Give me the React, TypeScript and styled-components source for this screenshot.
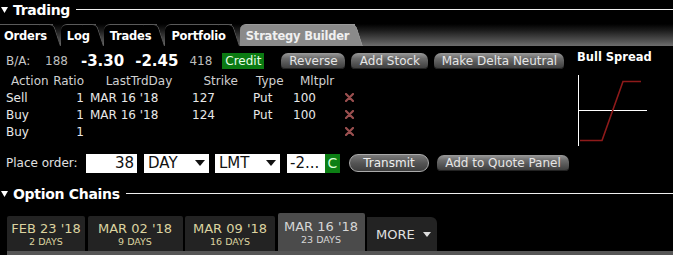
import React from "react";
import styled, { createGlobalStyle } from "styled-components";

const legs = [
  { action: "Sell", ratio: 1, day: "MAR 16 '18", strike: "127", type: "Put", mult: "100" },
  { action: "Buy", ratio: 1, day: "MAR 16 '18", strike: "124", type: "Put", mult: "100" },
  { action: "Buy", ratio: 1, day: "", strike: "", type: "", mult: "" },
];

const tabs = ["Orders", "Log", "Trades", "Portfolio", "Strategy Builder"];

const expiries = [
  { date: "FEB 23 '18", days: "2 DAYS", width: 78 },
  { date: "MAR 02 '18", days: "9 DAYS", width: 95 },
  { date: "MAR 09 '18", days: "16 DAYS", width: 90 },
  { date: "MAR 16 '18", days: "23 DAYS", width: 87, active: true },
];

export default function App() {
  return (
    <>
      <GlobalStyle />
      <Page>
        <SectionHeader>
          <Caret />
          <SectionTitle>Trading</SectionTitle>
          <Rule />
        </SectionHeader>

        <TabStrip>
          {tabs.map((t) => (
            <Tab key={t} $active={t === "Strategy Builder"}>
              {t}
            </Tab>
          ))}
        </TabStrip>

        <Builder>
          <LeftColumn>
            <QuoteRow>
              <Muted>B/A:</Muted>
              <Size $mr={13}>188</Size>
              <Price>-3.30</Price>
              <Price>-2.45</Price>
              <Size $mr={10}>418</Size>
              <Credit>Credit</Credit>
              <Buttons>
                <GrayButton $w={64}>Reverse</GrayButton>
                <GrayButton $w={77}>Add Stock</GrayButton>
                <GrayButton $w={130}>Make Delta Neutral</GrayButton>
              </Buttons>
            </QuoteRow>

            <LegTable>
              <HeadCell $align="left" $pad={5}>Action</HeadCell>
              <HeadCell $align="right">Ratio</HeadCell>
              <HeadCell $align="center" $pad={4}>LastTrdDay</HeadCell>
              <HeadCell $align="right" $pad={12}>Strike</HeadCell>
              <HeadCell $align="left" $pad={6}>Type</HeadCell>
              <HeadCell $align="left" $pad={10}>Mltplr</HeadCell>
              <HeadCell $align="left" />
              {legs.map((l, i) => (
                <React.Fragment key={i}>
                  <Cell $align="left">{l.action}</Cell>
                  <Cell $align="right">{l.ratio}</Cell>
                  <Cell $align="left" $pad={6}>{l.day}</Cell>
                  <Cell $align="left" $pad={2}>{l.strike}</Cell>
                  <Cell $align="left" $pad={3}>{l.type}</Cell>
                  <Cell $align="left" $pad={3}>{l.mult}</Cell>
                  <Cell $align="left" $pad={5}>
                    <RemoveIcon />
                  </Cell>
                </React.Fragment>
              ))}
            </LegTable>

            <OrderRow>
              <Label>Place order:</Label>
              <Field $w={51} $align="right" $mr={7}>38</Field>
              <Select $w={65}>
                DAY <Arrow />
              </Select>
              <Select $w={65}>
                LMT <Arrow />
              </Select>
              <PriceField>
                <Field $w={38} $align="left" $mr={0}>-2...</Field>
                <GreenC>C</GreenC>
              </PriceField>
              <TransmitButton>Transmit</TransmitButton>
              <GrayButton $w={132}>Add to Quote Panel</GrayButton>
            </OrderRow>
          </LeftColumn>

          <RightColumn>
            <StrategyName>Bull Spread</StrategyName>
            <PayoffChart />
          </RightColumn>
        </Builder>

        <SectionHeader>
          <Caret />
          <SectionTitle>Option Chains</SectionTitle>
          <Rule />
        </SectionHeader>

        <ExpiryStrip>
          {expiries.map((e) => (
            <ExpiryTab key={e.date} $active={!!e.active} $w={e.width}>
              <ExpiryDate $active={!!e.active}>{e.date}</ExpiryDate>
              <ExpiryDays $active={!!e.active}>{e.days}</ExpiryDays>
            </ExpiryTab>
          ))}
          <MoreTab>
            MORE <SmallArrow />
          </MoreTab>
        </ExpiryStrip>
        <ExpiryBar />
      </Page>
    </>
  );
}

const Caret = () => (
  <svg width="7" height="6" viewBox="0 0 7 6">
    <polygon points="0,0 7,0 3.5,6" fill="#fff" />
  </svg>
);

const Arrow = () => (
  <svg width="10" height="6" viewBox="0 0 10 6">
    <polygon points="0,0 10,0 5,6" fill="#111" />
  </svg>
);

const SmallArrow = () => (
  <svg width="8" height="5" viewBox="0 0 8 5">
    <polygon points="0,0 8,0 4,5" fill="#ddd" />
  </svg>
);

const RemoveIcon = () => (
  <svg width="9" height="9" viewBox="0 0 9 9">
    <path d="M1 1 L8 8 M8 1 L1 8" stroke="#9a4f4f" strokeWidth="2.2" strokeLinecap="round" />
  </svg>
);

const PayoffChart = () => (
  <svg width="76" height="72" viewBox="0 0 76 72">
    <line x1="1.5" y1="0" x2="1.5" y2="71" stroke="#fff" strokeWidth="1" />
    <line x1="1" y1="35.5" x2="70" y2="35.5" stroke="#fff" strokeWidth="1" />
    <polyline points="3,65.5 25,65.5 46,6.5 64,6.5" fill="none" stroke="#8e1a1a" strokeWidth="1.6" />
  </svg>
);

const GlobalStyle = createGlobalStyle`
  html, body {
    margin: 0;
    padding: 0;
    background: #000;
  }
  body {
    font-family: "DejaVu Sans", Verdana, sans-serif;
    color: #fff;
    overflow: hidden;
  }
`;

const Page = styled.div`
  width: 673px;
  height: 255px;
  background: #000;
  display: flex;
  flex-direction: column;
`;

const SectionHeader = styled.div`
  display: flex;
  align-items: center;
  gap: 5px;
  height: 19px;
  padding-left: 1px;
`;

const SectionTitle = styled.div`
  font-size: 14px;
  font-weight: bold;
  letter-spacing: -0.3px;
  color: #fff;
`;

const Rule = styled.div`
  flex: 1;
  height: 1px;
  background: #eee;
  margin-left: 1px;
  margin-top: -1px;
`;

const TabStrip = styled.div`
  display: flex;
  align-items: flex-end;
  height: 22px;
  margin-top: 5px;
  background: linear-gradient(180deg, #000 0%, #1c1c1c 30%, #555 80%, #6e6e6e 100%);
`;

const Tab = styled.div<{ $active: boolean }>`
  position: relative;
  height: 21px;
  line-height: 22px;
  padding: 0 6px;
  margin-right: 8px;
  font-size: 11.5px;
  font-weight: bold;
  letter-spacing: -0.2px;
  color: ${(p) => (p.$active ? "#f0f0f0" : "#fff")};
  background: ${(p) => (p.$active ? "#8a8a8a" : "#000")};
  border-top: 1px solid ${(p) => (p.$active ? "#9a9a9a" : "#5a5a5a")};
  border-top-left-radius: 6px;
  z-index: ${(p) => (p.$active ? 2 : 1)};
  &:first-child {
    border-top-left-radius: 0;
    padding-left: 4px;
  }
  &::after {
    content: "";
    position: absolute;
    top: -1px;
    bottom: 0;
    right: -8px;
    width: 14px;
    background: ${(p) => (p.$active ? "#8a8a8a" : "#000")};
    border-top: 1px solid ${(p) => (p.$active ? "#9a9a9a" : "#5a5a5a")};
    border-right: 1px solid ${(p) => (p.$active ? "#9a9a9a" : "#5a5a5a")};
    border-top-right-radius: 5px;
    transform: skewX(18deg);
    transform-origin: bottom;
    z-index: -1;
  }
`;

const Builder = styled.div`
  display: flex;
  height: 138px;
`;

const LeftColumn = styled.div`
  width: 577px;
  display: flex;
  flex-direction: column;
`;

const RightColumn = styled.div`
  display: flex;
  flex-direction: column;
  padding-top: 4px;
`;

const QuoteRow = styled.div`
  display: flex;
  align-items: center;
  height: 18px;
  margin-top: 6px;
  padding-left: 6px;
  font-size: 12px;
`;

const Muted = styled.span`
  color: #c8c8c8;
  width: 39px;
`;

const Size = styled.span<{ $mr: number }>`
  color: #bdbdbd;
  margin-right: ${(p) => p.$mr}px;
`;

const Price = styled.span`
  font-size: 15px;
  font-weight: bold;
  color: #fff;
  margin-right: 11px;
`;

const Credit = styled.span`
  background: #0b7a12;
  color: #e8ffe8;
  padding: 0 3px;
  height: 16px;
  line-height: 16px;
  font-size: 12px;
`;

const Buttons = styled.div`
  display: flex;
  gap: 6px;
  margin-left: 17px;
`;

const GrayButton = styled.div<{ $w: number }>`
  width: ${(p) => p.$w}px;
  height: 16px;
  line-height: 16px;
  text-align: center;
  font-size: 12px;
  color: #e6e6e6;
  border-radius: 7px 7px 4px 4px;
  background: linear-gradient(180deg, #9a9a9a 0%, #6a6a6a 35%, #3a3a3a 100%);
  box-shadow: inset 0 -1px 0 #222;
`;

const LegTable = styled.div`
  display: grid;
  grid-template-columns: 46px 32px 106px 60px 40px 50px 20px;
  grid-auto-rows: 17px;
  align-items: center;
  margin-top: 2px;
  padding-left: 6px;
  font-size: 12px;
`;

const HeadCell = styled.div<{ $align: string; $pad?: number }>`
  text-align: ${(p) => p.$align};
  padding-left: ${(p) => (p.$align === "right" ? 0 : p.$pad || 0)}px;
  padding-right: ${(p) => (p.$align === "right" ? p.$pad || 0 : 0)}px;
  color: #d0d0d0;
  white-space: nowrap;
`;

const Cell = styled.div<{ $align: string; $pad?: number }>`
  padding-left: ${(p) => p.$pad || 0}px;
  color: #e8e8e8;
  white-space: nowrap;
  display: flex;
  justify-content: ${(p) => (p.$align === "right" ? "flex-end" : "flex-start")};
`;

const OrderRow = styled.div`
  display: flex;
  align-items: center;
  height: 20px;
  margin-top: 13px;
  padding-left: 6px;
  font-size: 12px;
`;

const Label = styled.span`
  color: #e0e0e0;
  width: 80px;
`;

const Field = styled.div<{ $w: number; $align: string; $mr: number }>`
  width: ${(p) => p.$w}px;
  height: 19px;
  line-height: 19px;
  background: #fff;
  color: #111;
  font-size: 15px;
  text-align: ${(p) => p.$align};
  padding: 0 3px;
  box-sizing: border-box;
  margin-right: ${(p) => p.$mr}px;
`;

const Select = styled.div<{ $w: number }>`
  width: ${(p) => p.$w}px;
  height: 19px;
  line-height: 19px;
  background: #fff;
  color: #111;
  font-size: 15px;
  padding: 0 4px;
  box-sizing: border-box;
  margin-right: 6px;
  display: flex;
  align-items: center;
  justify-content: space-between;
`;

const PriceField = styled.div`
  display: flex;
  align-items: center;
  margin-left: 1px;
  margin-right: 9px;
`;

const GreenC = styled.div`
  width: 15px;
  height: 19px;
  line-height: 19px;
  background: #0c7f14;
  color: #d8ffd8;
  font-size: 14px;
  text-align: center;
`;

const TransmitButton = styled.div`
  width: 78px;
  height: 16px;
  line-height: 16px;
  text-align: center;
  font-size: 12px;
  color: #eee;
  border-radius: 9px;
  border: 1px solid #aaa;
  background: linear-gradient(180deg, #7a7a7a 0%, #555 50%, #3e3e3e 100%);
  margin-right: 8px;
`;

const StrategyName = styled.div`
  font-size: 11.5px;
  font-weight: bold;
  color: #fff;
  margin-bottom: 11px;
`;

const ExpiryStrip = styled.div`
  display: flex;
  align-items: flex-end;
  gap: 2.5px;
  margin-top: 10px;
  padding-left: 7px;
  height: 38px;
`;

const ExpiryTab = styled.div<{ $active: boolean; $w: number }>`
  display: flex;
  flex-direction: column;
  align-items: center;
  justify-content: center;
  width: ${(p) => p.$w}px;
  height: ${(p) => (p.$active ? 38 : 35)}px;
  padding-top: ${(p) => (p.$active ? 0 : 1)}px;
  box-sizing: border-box;
  background: ${(p) => (p.$active ? "#4b4b4b" : "#232323")};
  border-top-left-radius: 2px;
  border-top-right-radius: 2px;
`;

const ExpiryDate = styled.div<{ $active: boolean }>`
  font-size: 13px;
  line-height: 15px;
  color: ${(p) => (p.$active ? "#d6d6d6" : "#dcd3a0")};
`;

const ExpiryDays = styled.div<{ $active: boolean }>`
  font-size: 9.5px;
  line-height: 12px;
  color: ${(p) => (p.$active ? "#d6d6d6" : "#dcd3a0")};
`;

const MoreTab = styled.div`
  display: flex;
  align-items: center;
  gap: 8px;
  width: 70px;
  height: 34px;
  box-sizing: border-box;
  padding-left: 9px;
  background: #232323;
  border-top-right-radius: 6px;
  font-size: 13px;
  color: #e0e0e0;
`;

const ExpiryBar = styled.div`
  height: 4px;
  margin-left: 7px;
  background: #565656;
`;
